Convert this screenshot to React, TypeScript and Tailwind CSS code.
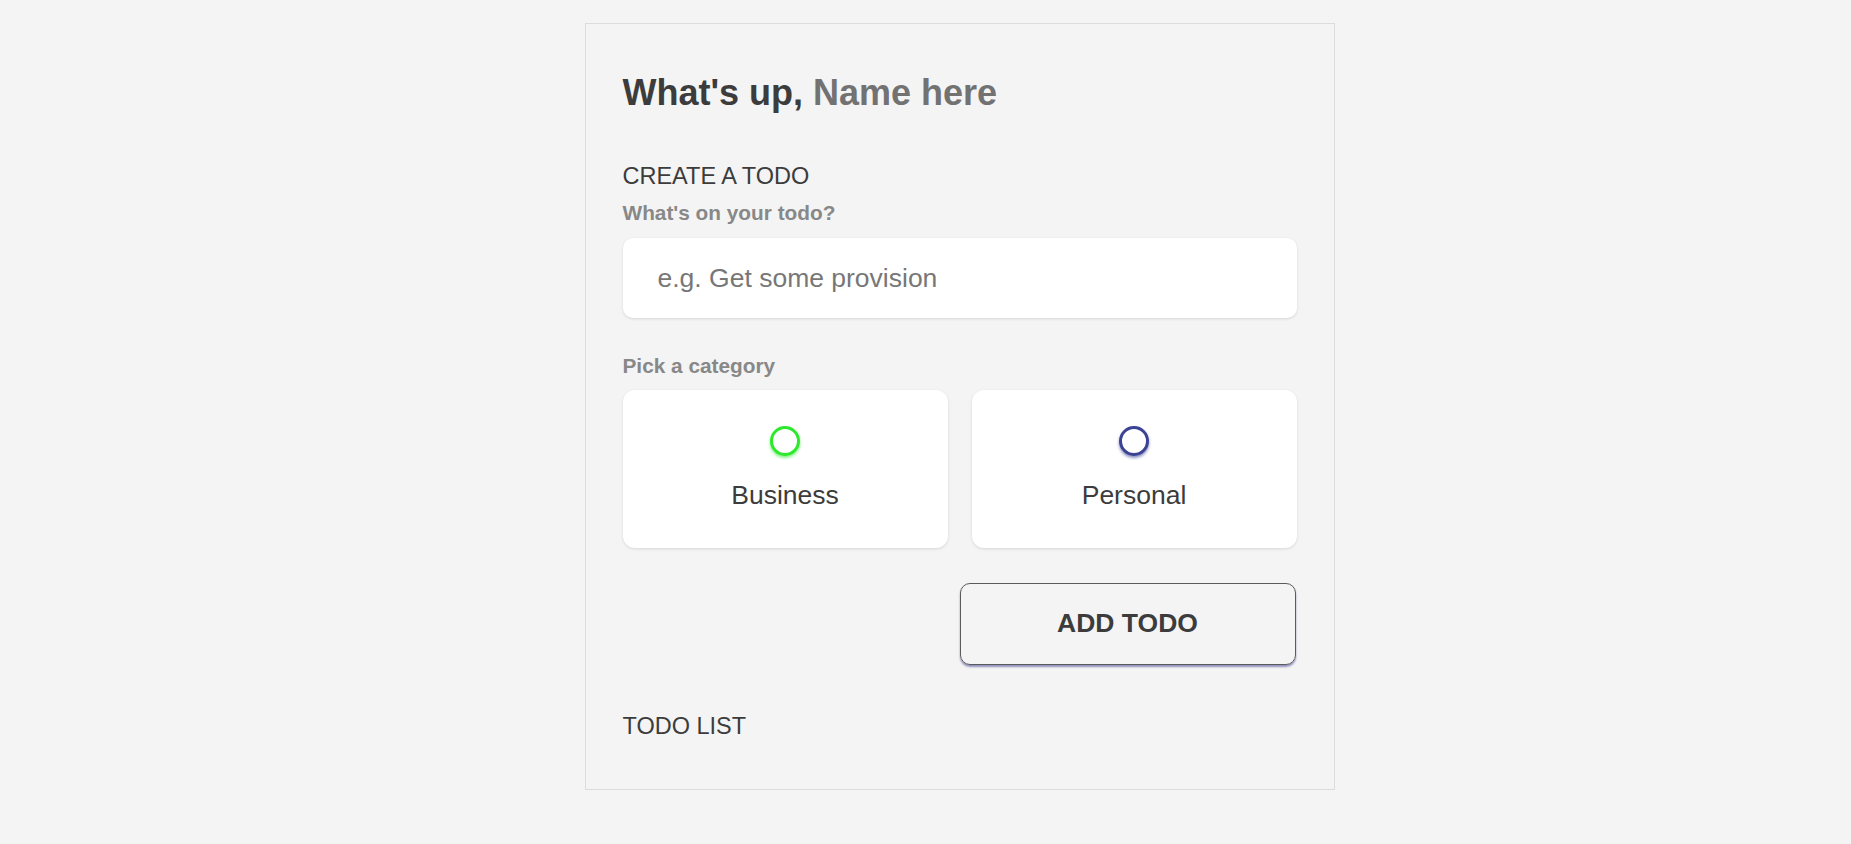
import { useState } from "react";

type Category = "business" | "personal";

function CategoryOption({
  label,
  ringClass,
  checked,
  onPick,
}: {
  label: string;
  ringClass: string;
  checked: boolean;
  onPick: () => void;
}) {
  return (
    <label
      onClick={onPick}
      className="flex flex-col items-center bg-white rounded-xl shadow-[0_1px_3px_rgba(0,0,0,0.12)] pt-[36px] pb-[38px] cursor-pointer"
    >
      <span
        className={`block w-[30px] h-[30px] rounded-full border-[3px] bg-white ${ringClass} ${
          checked ? "ring-4 ring-inset" : ""
        }`}
      />
      <span className="mt-[23.5px] text-[26.5px] leading-[30px] text-[#3c3c3c]">{label}</span>
    </label>
  );
}

export default function App() {
  const [todo, setTodo] = useState("");
  const [category, setCategory] = useState<Category | null>(null);

  return (
    <div
      className="min-h-screen bg-[#f4f4f4] flex justify-center pl-[68px] pt-[23px]"
      style={{ fontFamily: '"Liberation Sans", Arial, sans-serif' }}
    >
      <main className="w-[750px] h-[767px] border border-[#dcdcdc] px-[37px] pt-[48.3px]">
        <h2 className="text-[36px] leading-[41px] font-bold text-[#3c3c3c]">
          What's up, <span className="text-[#727272]">Name here</span>
        </h2>

        <section className="mt-[50px]">
          <h3 className="text-[23.5px] leading-[27px] text-[#3c3c3c]">CREATE A TODO</h3>
          <form onSubmit={(e) => e.preventDefault()}>
            <h4 className="mt-[11px] text-[20.8px] leading-[24px] font-bold text-[#888888]">
              What's on your todo?
            </h4>
            <input
              type="text"
              value={todo}
              onChange={(e) => setTodo(e.target.value)}
              placeholder="e.g. Get some provision"
              className="mt-[13px] block w-full h-[80px] rounded-[10px] bg-white px-[35px] text-[26.5px] text-[#3c3c3c] placeholder:text-[#777777] shadow-[0_1px_3px_rgba(0,0,0,0.12)] outline-none"
            />

            <h4 className="mt-[36px] text-[20.8px] leading-[24px] font-bold text-[#888888]">
              Pick a category
            </h4>
            <div className="mt-[12px] grid grid-cols-2 gap-[24px]">
              <CategoryOption
                label="Business"
                ringClass="border-[#2ee82e] shadow-[0_2px_3px_rgba(46,232,46,0.6)]"
                checked={category === "business"}
                onPick={() => setCategory("business")}
              />
              <CategoryOption
                label="Personal"
                ringClass="border-[#3b4394] shadow-[0_2px_3px_rgba(59,67,148,0.6)]"
                checked={category === "personal"}
                onPick={() => setCategory("personal")}
              />
            </div>

            <div className="mt-[34.8px] flex justify-end">
              <button
                type="submit"
                className="w-[336px] h-[82px] mr-px rounded-[10px] border border-[#5a5a5a] shadow-[0_2px_2px_rgba(60,64,150,0.55)] text-[26.5px] font-bold text-[#3c3c3c]"
              >
                ADD TODO
              </button>
            </div>
          </form>
        </section>

        <section className="mt-[48.3px]">
          <h3 className="text-[23.5px] leading-[27px] text-[#3c3c3c]">TODO LIST</h3>
        </section>
      </main>
    </div>
  );
}
